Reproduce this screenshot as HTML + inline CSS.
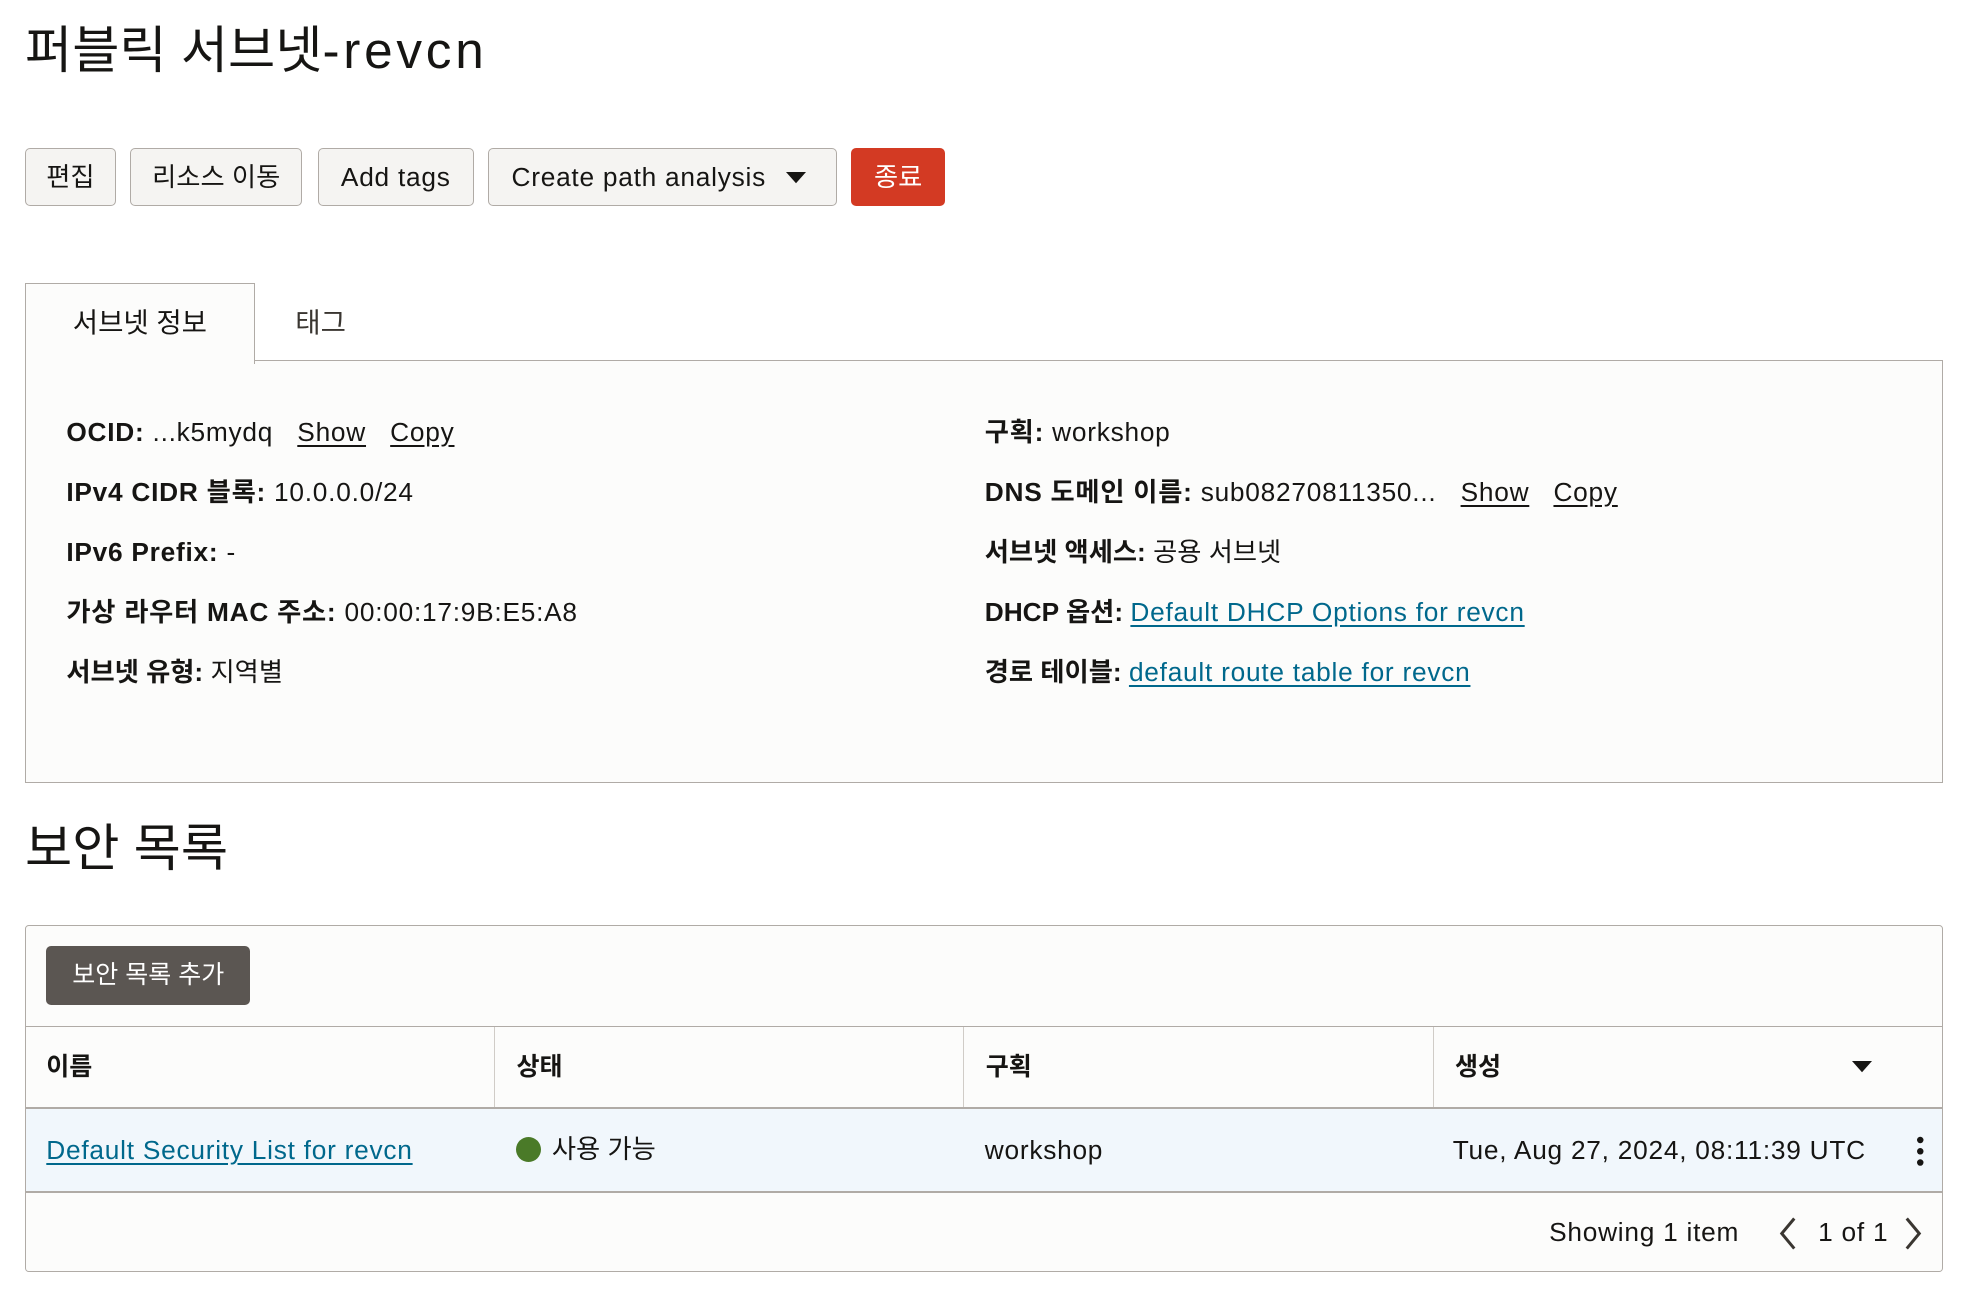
<!DOCTYPE html>
<html><head><meta charset="utf-8"><style>
html,body{margin:0;padding:0;background:#fff;}
body{width:1962px;height:1304px;overflow:hidden;}
#w{zoom:1.25128;width:1568px;height:1042px;position:relative;font-family:"Liberation Sans","Noto Sans CJK KR",sans-serif;color:#161513;}
.a{position:absolute;white-space:nowrap;}
.btn{position:absolute;top:118px;height:45px;border:1px solid #b0aba6;border-radius:4px;background:#f5f4f2;font-size:21px;line-height:45px;text-align:center;box-sizing:content-box;}
.row{position:absolute;font-size:21px;line-height:24px;white-space:nowrap;}
.l{letter-spacing:.6px;}
b{font-weight:bold;}
.u{text-decoration:underline;text-underline-offset:3px;}
.lk{color:#00688c;text-decoration:underline;text-underline-offset:3px;letter-spacing:.6px;}
.th{position:absolute;top:821px;height:64px;line-height:64px;font-size:20px;font-weight:bold;border-left:1px solid #d0ccc7;}
</style></head><body><div id="w">
<div class="a" style="left:20px;top:16px;font-size:41px;line-height:50px;">퍼블릭 서브넷<span style="letter-spacing:3px">-revcn</span></div>

<div class="btn" style="left:20px;width:71px;">편집</div>
<div class="btn" style="left:104px;width:136px;">리소스 이동</div>
<div class="btn" style="left:254px;width:123px;"><span class="l">Add tags</span></div>
<div class="btn" style="left:390px;width:277px;text-align:left;"><span class="l" style="padding-left:18px">Create path analysis</span><svg style="position:absolute;left:237px;top:19px" width="16" height="10"><path d="M0 0H16L8 9Z" fill="#161513"/></svg></div>
<div class="btn" style="left:680px;width:74px;background:#d33a23;border-color:#d33a23;color:#fff;">종료</div>

<div class="a" style="left:20px;top:226px;width:182px;height:64px;border:1px solid #b0aba6;border-bottom:none;background:#fcfcfb;z-index:2;font-size:22px;line-height:62px;text-align:center;">서브넷 정보</div>
<div class="a" style="left:236px;top:240px;font-size:22px;color:#3a3631;">태그</div>
<div class="a" style="left:20px;top:288px;width:1531px;height:336px;border:1px solid #b0aba6;background:#fcfcfb;"></div>

<div class="row l" style="left:53px;top:333px;"><b>OCID:</b> ...k5mydq &nbsp; <span class="u">Show</span> &nbsp; <span class="u">Copy</span></div>
<div class="row l" style="left:53px;top:381px;"><b>IPv4 CIDR 블록:</b> 10.0.0.0/24</div>
<div class="row l" style="left:53px;top:429px;"><b>IPv6 Prefix:</b> -</div>
<div class="row l" style="left:53px;top:477px;"><b>가상 라우터 MAC 주소:</b> 00:00:17:9B:E5:A8</div>
<div class="row" style="left:53px;top:525px;"><b>서브넷 유형:</b> 지역별</div>

<div class="row l" style="left:787px;top:333px;"><b>구획:</b> workshop</div>
<div class="row l" style="left:787px;top:381px;"><b>DNS 도메인 이름:</b> sub08270811350... &nbsp; <span class="u">Show</span> &nbsp; <span class="u">Copy</span></div>
<div class="row" style="left:787px;top:429px;"><b>서브넷 액세스:</b> 공용 서브넷</div>
<div class="row" style="left:787px;top:477px;"><b>DHCP 옵션:</b> <span class="lk">Default DHCP Options for revcn</span></div>
<div class="row" style="left:787px;top:525px;"><b>경로 테이블:</b> <span class="lk">default route table for revcn</span></div>

<div class="a" style="left:20px;top:654px;font-size:41px;line-height:50px;">보안 목록</div>

<div class="a" style="left:20px;top:739px;width:1531px;height:276px;border:1px solid #b0aba6;border-radius:3px;background:#fcfcfb;"></div>
<div class="a" style="left:37px;top:756px;width:163px;height:47px;border-radius:4px;background:#5b5652;color:#fff;font-size:20px;line-height:47px;text-align:center;">보안 목록 추가</div>
<div class="a" style="left:21px;top:820px;width:1531px;height:1px;background:#b0aba6;"></div>
<div class="th" style="left:20px;width:374px;border-left:none;padding-left:17px;">이름</div>
<div class="th" style="left:395px;width:357px;padding-left:17px;">상태</div>
<div class="th" style="left:770px;width:357px;padding-left:17px;">구획</div>
<div class="th" style="left:1145px;width:390px;padding-left:17px;">생성</div>
<svg class="a" style="left:1480px;top:848px" width="16" height="10"><path d="M0 0H16L8 9Z" fill="#161513"/></svg>
<div class="a" style="left:21px;top:885px;width:1531px;height:65px;background:#f1f7fc;border-top:2px solid #b0aba6;border-bottom:2px solid #b0aba6;"></div>
<div class="row" style="left:37px;top:907px;"><span class="lk">Default Security List for revcn</span></div>
<div class="a" style="left:412px;top:909px;width:20px;height:20px;border-radius:50%;background:#4a7a28;"></div>
<div class="row" style="left:441px;top:906px;">사용 가능</div>
<div class="row l" style="left:787px;top:907px;">workshop</div>
<div class="row l" style="left:1161px;top:907px;">Tue, Aug 27, 2024, 08:11:39 UTC</div>
<svg class="a" style="left:1530px;top:907px" width="10" height="26"><circle cx="5" cy="4" r="2.6" fill="#161513"/><circle cx="5" cy="13" r="2.6" fill="#161513"/><circle cx="5" cy="22" r="2.6" fill="#161513"/></svg>
<div class="row l" style="left:1238px;top:973px;">Showing 1 item</div>
<svg class="a" style="left:1421px;top:972px" width="16" height="28"><path d="M13 2L3 14L13 26" stroke="#3a3631" stroke-width="2.4" fill="none"/></svg>
<div class="row l" style="left:1453px;top:973px;">1 of 1</div>
<svg class="a" style="left:1521px;top:972px" width="16" height="28"><path d="M3 2L13 14L3 26" stroke="#3a3631" stroke-width="2.4" fill="none"/></svg>
</div></body></html>
